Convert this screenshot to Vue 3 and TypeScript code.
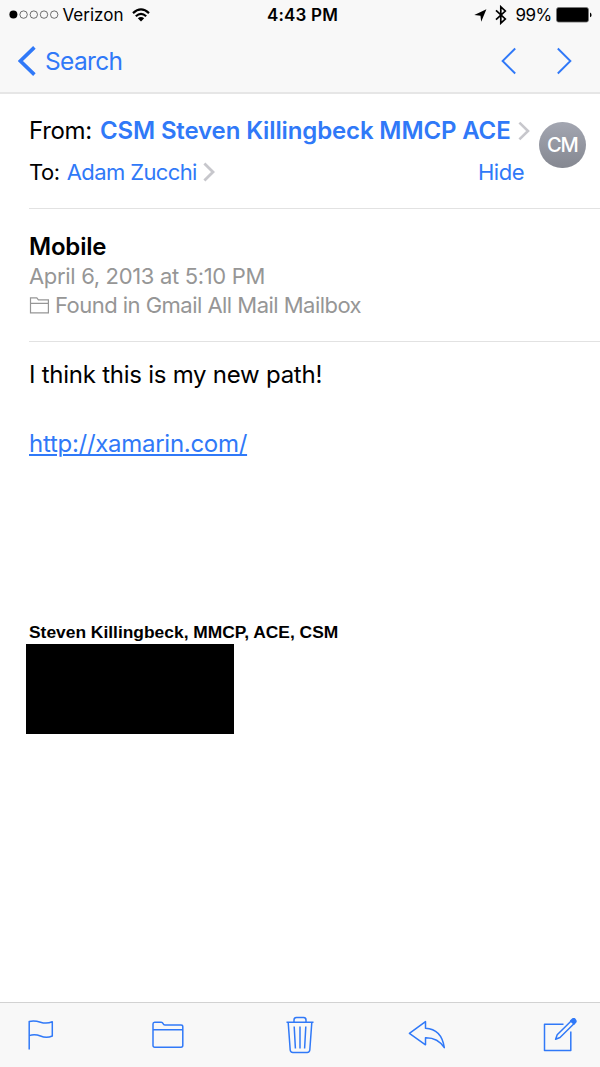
<script setup lang="ts">
const signal: boolean[] = [true, false, false, false, false]
const mail = {
  from: 'CSM Steven Killingbeck MMCP ACE',
  initials: 'CM',
  to: 'Adam Zucchi',
  subject: 'Mobile',
  date: 'April 6, 2013 at 5:10 PM',
  mailbox: 'Found in Gmail All Mail Mailbox',
  text: 'I think this is my new path!',
  link: 'http://xamarin.com/',
  signature: 'Steven Killingbeck, MMCP, ACE, CSM',
}
</script>

<template>
  <div class="screen">
    <header class="top">
      <div class="status">
        <div class="carrier">
          <svg class="dots" width="50" height="10" viewBox="0 0 50 10">
            <circle v-for="(on, i) in signal" :key="i" :cx="4.4 + i * 10.2" cy="4.6" :r="on ? 4 : 3.7"
              :fill="on ? '#000' : 'none'" :stroke="on ? 'none' : '#333'" stroke-width=".7" />
          </svg>
          <span class="verizon">Verizon</span>
          <svg class="wifi" width="18" height="14" viewBox="0 0 18 14">
            <g fill="none" stroke="#000" stroke-width="2.2">
              <path d="M1 5.1Q9-2.3 17 5.1" />
              <path d="M3.8 8.2Q9 3.6 14.2 8.2" />
            </g>
            <path d="M5.8 10.3Q9 7.6 12.2 10.3L9 13.6Z" />
          </svg>
        </div>
        <span class="clock">4:43 PM</span>
        <div class="power">
          <svg width="13" height="13" viewBox="0 0 13 13"><path d="M12.4.2L7.2 12.8 6.5 6.7.3 6Z" /></svg>
          <svg class="bt" width="12" height="20" viewBox="0 0 12 20">
            <path d="M1 5.4L10.3 14 5.8 18.2V1.8L10.3 6 1 14.6" fill="none" stroke="#000" stroke-width="1.7" />
          </svg>
          <span class="percent">99%</span>
          <svg class="battery" width="36" height="16" viewBox="0 0 36 16">
            <rect x=".5" y=".5" width="32" height="14.6" rx="2.2" fill="#000" stroke="#777" stroke-width=".8" />
            <path d="M34 5.5q1.6.6 1.6 2.4T34 10.3Z" />
          </svg>
        </div>
      </div>
      <nav class="nav">
        <a class="back">
          <svg width="18" height="30" viewBox="0 0 18 30"><path d="M16.4 1.4L2.4 15l14 13.6" fill="none" stroke="#3079f8" stroke-width="3.6" /></svg>
          <span>Search</span>
        </a>
        <div class="arrows">
          <svg width="16" height="28" viewBox="0 0 16 28"><path d="M14.2 1.5L1.6 14l12.6 12.5" fill="none" stroke="#3079f8" stroke-width="1.9" /></svg>
          <svg width="16" height="28" viewBox="0 0 16 28"><path d="M1.8 1.5L14.4 14 1.8 26.5" fill="none" stroke="#3079f8" stroke-width="1.9" /></svg>
        </div>
      </nav>
    </header>

    <main class="mail">
      <section class="people">
        <div class="lines">
          <div class="row from">
            <span class="label">From:</span><a class="sender">{{ mail.from }}</a>
            <svg class="chev" width="12" height="20" viewBox="0 0 12 20"><path d="M1.4 1.6L10 10 1.4 18.4" fill="none" stroke="#c7c7cc" stroke-width="2.6" /></svg>
          </div>
          <div class="row to">
            <span class="label">To:</span><a class="recipient">{{ mail.to }}</a>
            <svg class="chev" width="12" height="20" viewBox="0 0 12 20"><path d="M1.4 1.6L10 10 1.4 18.4" fill="none" stroke="#c7c7cc" stroke-width="2.8" /></svg>
            <a class="hide">Hide</a>
          </div>
        </div>
        <div class="avatar"><span>{{ mail.initials }}</span></div>
      </section>

      <section class="subject">
        <h1>{{ mail.subject }}</h1>
        <p class="date">{{ mail.date }}</p>
        <p class="mailbox">
          <svg width="20" height="17" viewBox="0 0 20 17">
            <path d="M1.5 15.9V.9h6.3l1.6 2H19.4v13ZM1.5 6.3H19.4" fill="none" stroke="#969696" stroke-width="1.2" />
          </svg>
          <span>{{ mail.mailbox }}</span>
        </p>
      </section>

      <section class="body">
        <p class="text">{{ mail.text }}</p>
        <p><a class="link">{{ mail.link }}</a></p>
        <p class="signature">{{ mail.signature }}</p>
        <div class="redacted"></div>
      </section>
    </main>

    <footer class="tools">
      <svg width="26" height="30" viewBox="0 0 26 30">
        <path d="M1.2 29.5V1.4Q6.5.2 12.5 2.2T24.3 1.8V16Q18.5 18.5 12.5 16T1.2 15.6" />
      </svg>
      <svg class="folder" width="32" height="28" viewBox="0 0 32 28">
        <path d="M1 3Q1 1.2 2.6 1.2H9.2Q10.5 1.2 11 2.6T13 4H29Q30.8 4 30.8 5.7V24.5Q30.8 26.2 29 26.2H2.7Q1 26.2 1 24.5ZM1 8.8H30.8" />
      </svg>
      <svg class="trash" width="28" height="38" viewBox="0 0 28 38">
        <path d="M.5 6.3H27.5M8 6V4Q8 1.5 10.5 1.5H17.5Q20 1.5 20 4V6M2.2 6.5L4.2 34Q4.4 36.4 6.8 36.4H21.2Q23.6 36.4 23.8 34L25.8 6.5M8.2 10.5L9.4 32.5M14 10.5V32.5M19.8 10.5L18.6 32.5" />
      </svg>
      <svg class="reply" width="38" height="30" viewBox="0 0 38 30">
        <path d="M1.4 13.4L17.5 1.6V8.3Q33.5 9 36.3 27.7Q30 17.5 17.5 17.7V24.8Z" />
      </svg>
      <svg width="34" height="35" viewBox="0 0 34 35">
        <path d="M20.5 6.3H1.5V32.6H27.8V13.5" />
        <path d="M12.6 21.2L14.2 16.7 28.4 2.7 31.2 5.5 17 19.5Z" />
        <path d="M27.7 2.9L29.6 1Q30.8 0 32.1 1.4T32.8 4L31 6Z" fill="#3079f8" />
      </svg>
    </footer>
  </div>
</template>

<style>
body { margin: 0; background: #fff; }
</style>

<style scoped>
.screen {
  width: 600px; height: 1067px; display: flex; flex-direction: column; overflow: hidden;
  background: #fff; color: #000; font-family: Inter, "Liberation Sans", sans-serif; white-space: nowrap;
}
svg { display: block; flex: none; }
p, h1 { margin: 0; }
a { color: #3079f8; }
.top { height: 92px; flex: none; background: #f8f8f8; border-bottom: 2px solid #e6e6e6; }
.status { height: 30px; display: grid; grid-template-columns: 1fr auto 1fr; align-items: center; font-size: 17px; line-height: 30px; }
.carrier { display: flex; align-items: center; padding-left: 9px; }
.verizon { margin-left: 3.5px; }
.wifi { margin-left: 9px; }
.clock { font-weight: 600; letter-spacing: .2px; padding-left: 5px; }
.power { display: flex; align-items: center; justify-content: flex-end; padding-right: 8px; }
.bt { margin-left: 8px; }
.percent { margin-left: 8.5px; letter-spacing: -.6px; }
.battery { margin-left: 4.5px; }
.nav { height: 62px; display: flex; justify-content: space-between; align-items: center; padding: 0 28px 0 18px; }
.back { display: flex; align-items: center; gap: 9px; font-size: 24.5px; line-height: 62px; letter-spacing: -.65px; }
.arrows { display: flex; gap: 39px; }
.mail { flex: 1; padding-left: 29px; }
.people { display: flex; height: 98px; padding-top: 16px; border-bottom: 1px solid #e2e2e2; }
.lines { width: 510px; }
.row { display: flex; align-items: center; }
.from { height: 41px; font-size: 24px; }
.from .label { letter-spacing: -.3px; }
.to { height: 42px; font-size: 22px; }
.to .label { letter-spacing: -.4px; }
.sender { margin-left: 8px; font-weight: 600; letter-spacing: -.13px; }
.recipient { margin-left: 7px; letter-spacing: -.62px; }
.chev { margin-left: 7px; }
.to .chev { margin-left: 6px; }
.hide { margin-left: auto; margin-right: 15px; letter-spacing: -.5px; }
.avatar {
  width: 46.5px; height: 46.5px; margin-top: 11.5px; border-radius: 50%; display: grid; place-items: center;
  background: linear-gradient(#a3a6b1, #858891); color: #fff; font-size: 20px; font-weight: 500; letter-spacing: -1.2px;
}
.subject { padding-top: 23px; height: 109px; border-bottom: 1px solid #e2e2e2; color: #969696; font-size: 22px; line-height: 29px; }
h1 { color: #000; font-size: 24px; line-height: 30px; font-weight: 600; letter-spacing: -.2px; }
.date { letter-spacing: -.33px; }
.mailbox { display: flex; align-items: center; gap: 6px; letter-spacing: -.53px; }
.body { padding-top: 15px; font-size: 24px; line-height: 35px; letter-spacing: -.25px; }
.text { margin-bottom: 34px; }
.link { text-decoration: underline; text-decoration-thickness: 1.5px; text-underline-offset: 2px; text-decoration-skip-ink: auto; letter-spacing: -.28px; }
.signature { margin-top: 160px; font: bold 17.4px/23px "Liberation Sans", sans-serif; letter-spacing: 0; }
.redacted { width: 208px; height: 90px; margin-left: -3px; background: #000; }
.tools {
  flex: none; height: 64px; border-top: 1px solid #d2d2d2; background: #f8f8f8;
  display: flex; align-items: center; justify-content: space-between; padding: 0 23px 0 27.5px;
}
.tools svg { fill: none; stroke: #3079f8; stroke-width: 1.5; stroke-linejoin: round; }
.tools .folder { margin-left: .8px; margin-right: -.8px; }
.tools .trash { margin-left: 4.3px; margin-right: -4.3px; }
.tools .reply { margin-left: 1px; margin-right: -1px; }
</style>
